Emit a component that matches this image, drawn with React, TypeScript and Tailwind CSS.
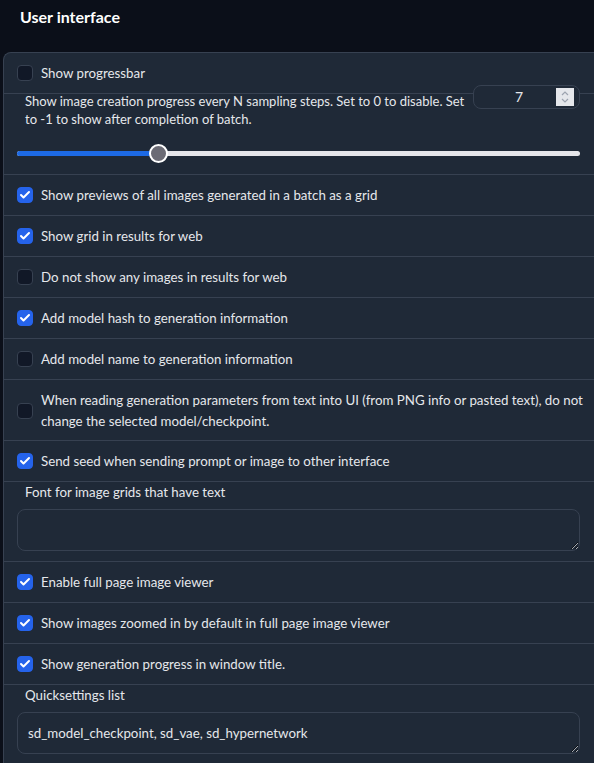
import { Check } from "lucide-react";

const font = { fontFamily: "Lato, 'Noto Sans', sans-serif" };

function Box({ checked }: { checked?: boolean }) {
  return (
    <span
      className={
        "flex h-4 w-4 shrink-0 items-center justify-center rounded " +
        (checked ? "bg-[#2563eb] border border-[#2563eb]" : "bg-[#111827] border border-[#374151]")
      }
    >
      {checked && <Check className="h-3 w-3 text-white" strokeWidth={4} />}
    </span>
  );
}

function CheckRow({ label, checked }: { label: string; checked?: boolean }) {
  return (
    <div className="flex items-center gap-2 border-t border-[#374151] py-[10px] pl-[13px] pr-4">
      <Box checked={checked} />
      <span className="leading-[20px]">{label}</span>
    </div>
  );
}

function TextField({ label, value }: { label: string; value?: string }) {
  return (
    <div className="border-t border-[#374151] pb-[10px] pl-[13px] pr-[14px]">
      <div className="pl-[8px] leading-[20px]">{label}</div>
      <textarea
        defaultValue={value}
        rows={1}
        className="mt-[7px] block h-[42px] w-full resize-y rounded-lg border border-[#374151] bg-[#1f2937] px-[10px] py-[10px] leading-[20px] text-[#e5e7eb] outline-none"
        style={font}
      />
    </div>
  );
}

export default function App() {
  return (
    <div className="min-h-[763px] w-[594px] overflow-hidden bg-[#0b0f19] text-[13.3px] text-[#e5e7eb]" style={font}>
      <h2 className="px-5 pb-[23px] pt-[5px] text-[16px] font-bold leading-[24px] text-white">User interface</h2>

      <div className="ml-[3px] w-[620px] rounded-tl-lg border-l border-t border-[#374151] bg-[#1f2937] pr-[29px] [&>div:first-child]:border-t-0">
        <CheckRow label="Show progressbar" />

        {/* steps slider */}
        <div className="border-t border-[#374151] pb-[12px] pl-[13px] pr-[14px]">
          <div className="flex items-start">
            <div className="mt-[-2px] min-w-0 flex-1 pl-[8px] pr-[4px] text-[13px] leading-[18px]">
              Show image creation progress every N sampling steps. Set to 0 to disable. Set to -1 to show after completion of batch.
            </div>
            <div className="mt-[-9px] flex h-[24px] w-[107px] shrink-0 items-center rounded-lg border border-[#374151] bg-[#1f2937] pl-[8px] pr-[5px]">
              <span className="flex-1 text-center text-[14px] leading-none">7</span>
              <span className="flex h-[18px] w-[18px] flex-col items-center justify-center bg-[#e5e7eb]">
                <svg width="10" height="14" viewBox="0 0 10 14" fill="none" stroke="#9ca3af" strokeWidth="1.2">
                  <path d="M2 5 L5 2 L8 5" />
                  <path d="M2 9 L5 12 L8 9" />
                </svg>
              </span>
            </div>
          </div>
          <div className="relative mt-[16px] h-[18px]">
            <div className="absolute left-0 right-0 top-[7px] h-[5px] rounded-full bg-[#e5e5ea]" />
            <div className="absolute left-0 top-[7px] h-[5px] w-[143px] rounded-full bg-[#1d6ae5]" />
            <div className="absolute left-[132px] top-0 h-[19px] w-[19px] rounded-full border-2 border-white bg-[#6b6b75]" />
          </div>
        </div>

        <CheckRow label="Show previews of all images generated in a batch as a grid" checked />
        <CheckRow label="Show grid in results for web" checked />
        <CheckRow label="Do not show any images in results for web" />
        <CheckRow label="Add model hash to generation information" checked />
        <CheckRow label="Add model name to generation information" />
        <div className="flex items-center gap-2 border-t border-[#374151] pb-[8px] pl-[13px] pr-[4px] pt-[10px]">
          <Box />
          <span className="leading-[21px]">
            When reading generation parameters from text into UI (from PNG info or pasted text), do not change the selected model/checkpoint.
          </span>
        </div>
        <CheckRow label="Send seed when sending prompt or image to other interface" checked />
        <TextField label="Font for image grids that have text" />
        <CheckRow label="Enable full page image viewer" checked />
        <CheckRow label="Show images zoomed in by default in full page image viewer" checked />
        <CheckRow label="Show generation progress in window title." checked />
        <TextField label="Quicksettings list" value="sd_model_checkpoint, sd_vae, sd_hypernetwork" />
      </div>
    </div>
  );
}
